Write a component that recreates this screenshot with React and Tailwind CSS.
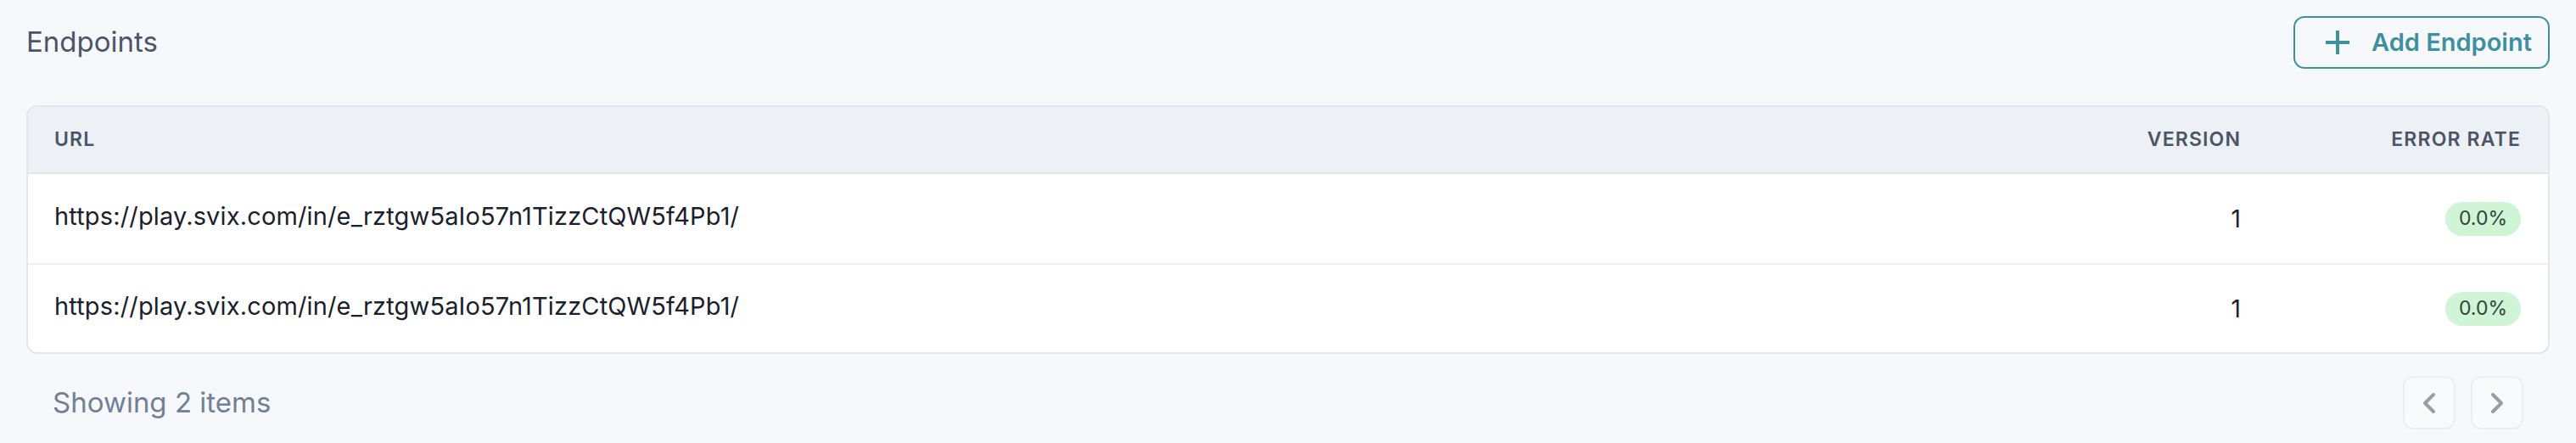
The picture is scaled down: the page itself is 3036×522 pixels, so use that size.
import React from 'react';
import { ChevronLeft, ChevronRight } from 'lucide-react';

const endpoints = [
    { url: 'https://play.svix.com/in/e_rztgw5aIo57n1TizzCtQW5f4Pb1/', version: 1, errorRate: '0.0%' },
    { url: 'https://play.svix.com/in/e_rztgw5aIo57n1TizzCtQW5f4Pb1/', version: 1, errorRate: '0.0%' }
];

const App = () => {
    return (
        <div className="min-h-[522px] bg-[#f7f8fb] px-[31px] pt-[19px] font-['Inter','Liberation_Sans',sans-serif]">
            {/* ── Header ─────────────────── */}
            <div className="flex items-center justify-between h-[62px]">
                <h2 className="text-[33px] font-normal text-[#4a5568]">Endpoints</h2>
                <button className="flex items-center h-[62px] w-[302px] pl-[36px] gap-[26px] rounded-[13px] border-2 border-[#3f909e] text-[#3f909e] text-[29px] font-semibold">
                    <svg width="28" height="28" viewBox="0 0 28 28" fill="none" stroke="currentColor" strokeWidth="4">
                        <line x1="14" y1="0" x2="14" y2="28" />
                        <line x1="0" y1="14" x2="28" y2="14" />
                    </svg>
                    Add Endpoint
                </button>
            </div>

            {/* ── Table ─────────────────── */}
            <div className="mt-[43px] rounded-[13px] border-2 border-[#e2e5ed] bg-white overflow-hidden">
                <div className="grid grid-cols-[1fr_200px_330px] h-[79px] items-center bg-[#edf0f5] border-b-2 border-[#e2e5ed] text-[23px] font-semibold tracking-wider text-[#4a5568] uppercase">
                    <div className="pl-[31px]">URL</div>
                    <div className="pr-[32px] text-right">Version</div>
                    <div className="pr-[32px] text-right">Error Rate</div>
                </div>
                {endpoints.map((ep, i) => (
                    <div
                        key={i}
                        className={`grid grid-cols-[1fr_200px_330px] h-[105px] items-center text-[28px] text-[#1a202c] ${i > 0 ? 'border-t-2 border-[#edf0f5]' : ''}`}
                    >
                        <div className="pl-[31px] pb-[6px] text-[29px] tracking-[0.005em]">{ep.url}</div>
                        <div className="pr-[32px] text-right">{ep.version}</div>
                        <div className="pr-[32px] flex justify-end">
                            <span className="h-[40px] px-[16px] flex items-center rounded-full bg-[#cff4d6] text-[#2f4636] text-[23px]">
                                {ep.errorRate}
                            </span>
                        </div>
                    </div>
                ))}
            </div>

            {/* ── Footer ─────────────────── */}
            <div className="flex items-center justify-between px-[31px] mt-[26px]">
                <span className="text-[33px] text-[#718096]">Showing 2 items</span>
                <div className="flex gap-[18px]">
                    <button className="w-[62px] h-[63px] flex items-center justify-center rounded-[12px] border-2 border-[#eceef3] bg-[#f9fafc] text-[#9a9ca6]">
                        <ChevronLeft size={40} strokeWidth={2.4} />
                    </button>
                    <button className="w-[62px] h-[63px] flex items-center justify-center rounded-[12px] border-2 border-[#eceef3] bg-[#f9fafc] text-[#9a9ca6]">
                        <ChevronRight size={40} strokeWidth={2.4} />
                    </button>
                </div>
            </div>
        </div>
    );
};

export default App;
